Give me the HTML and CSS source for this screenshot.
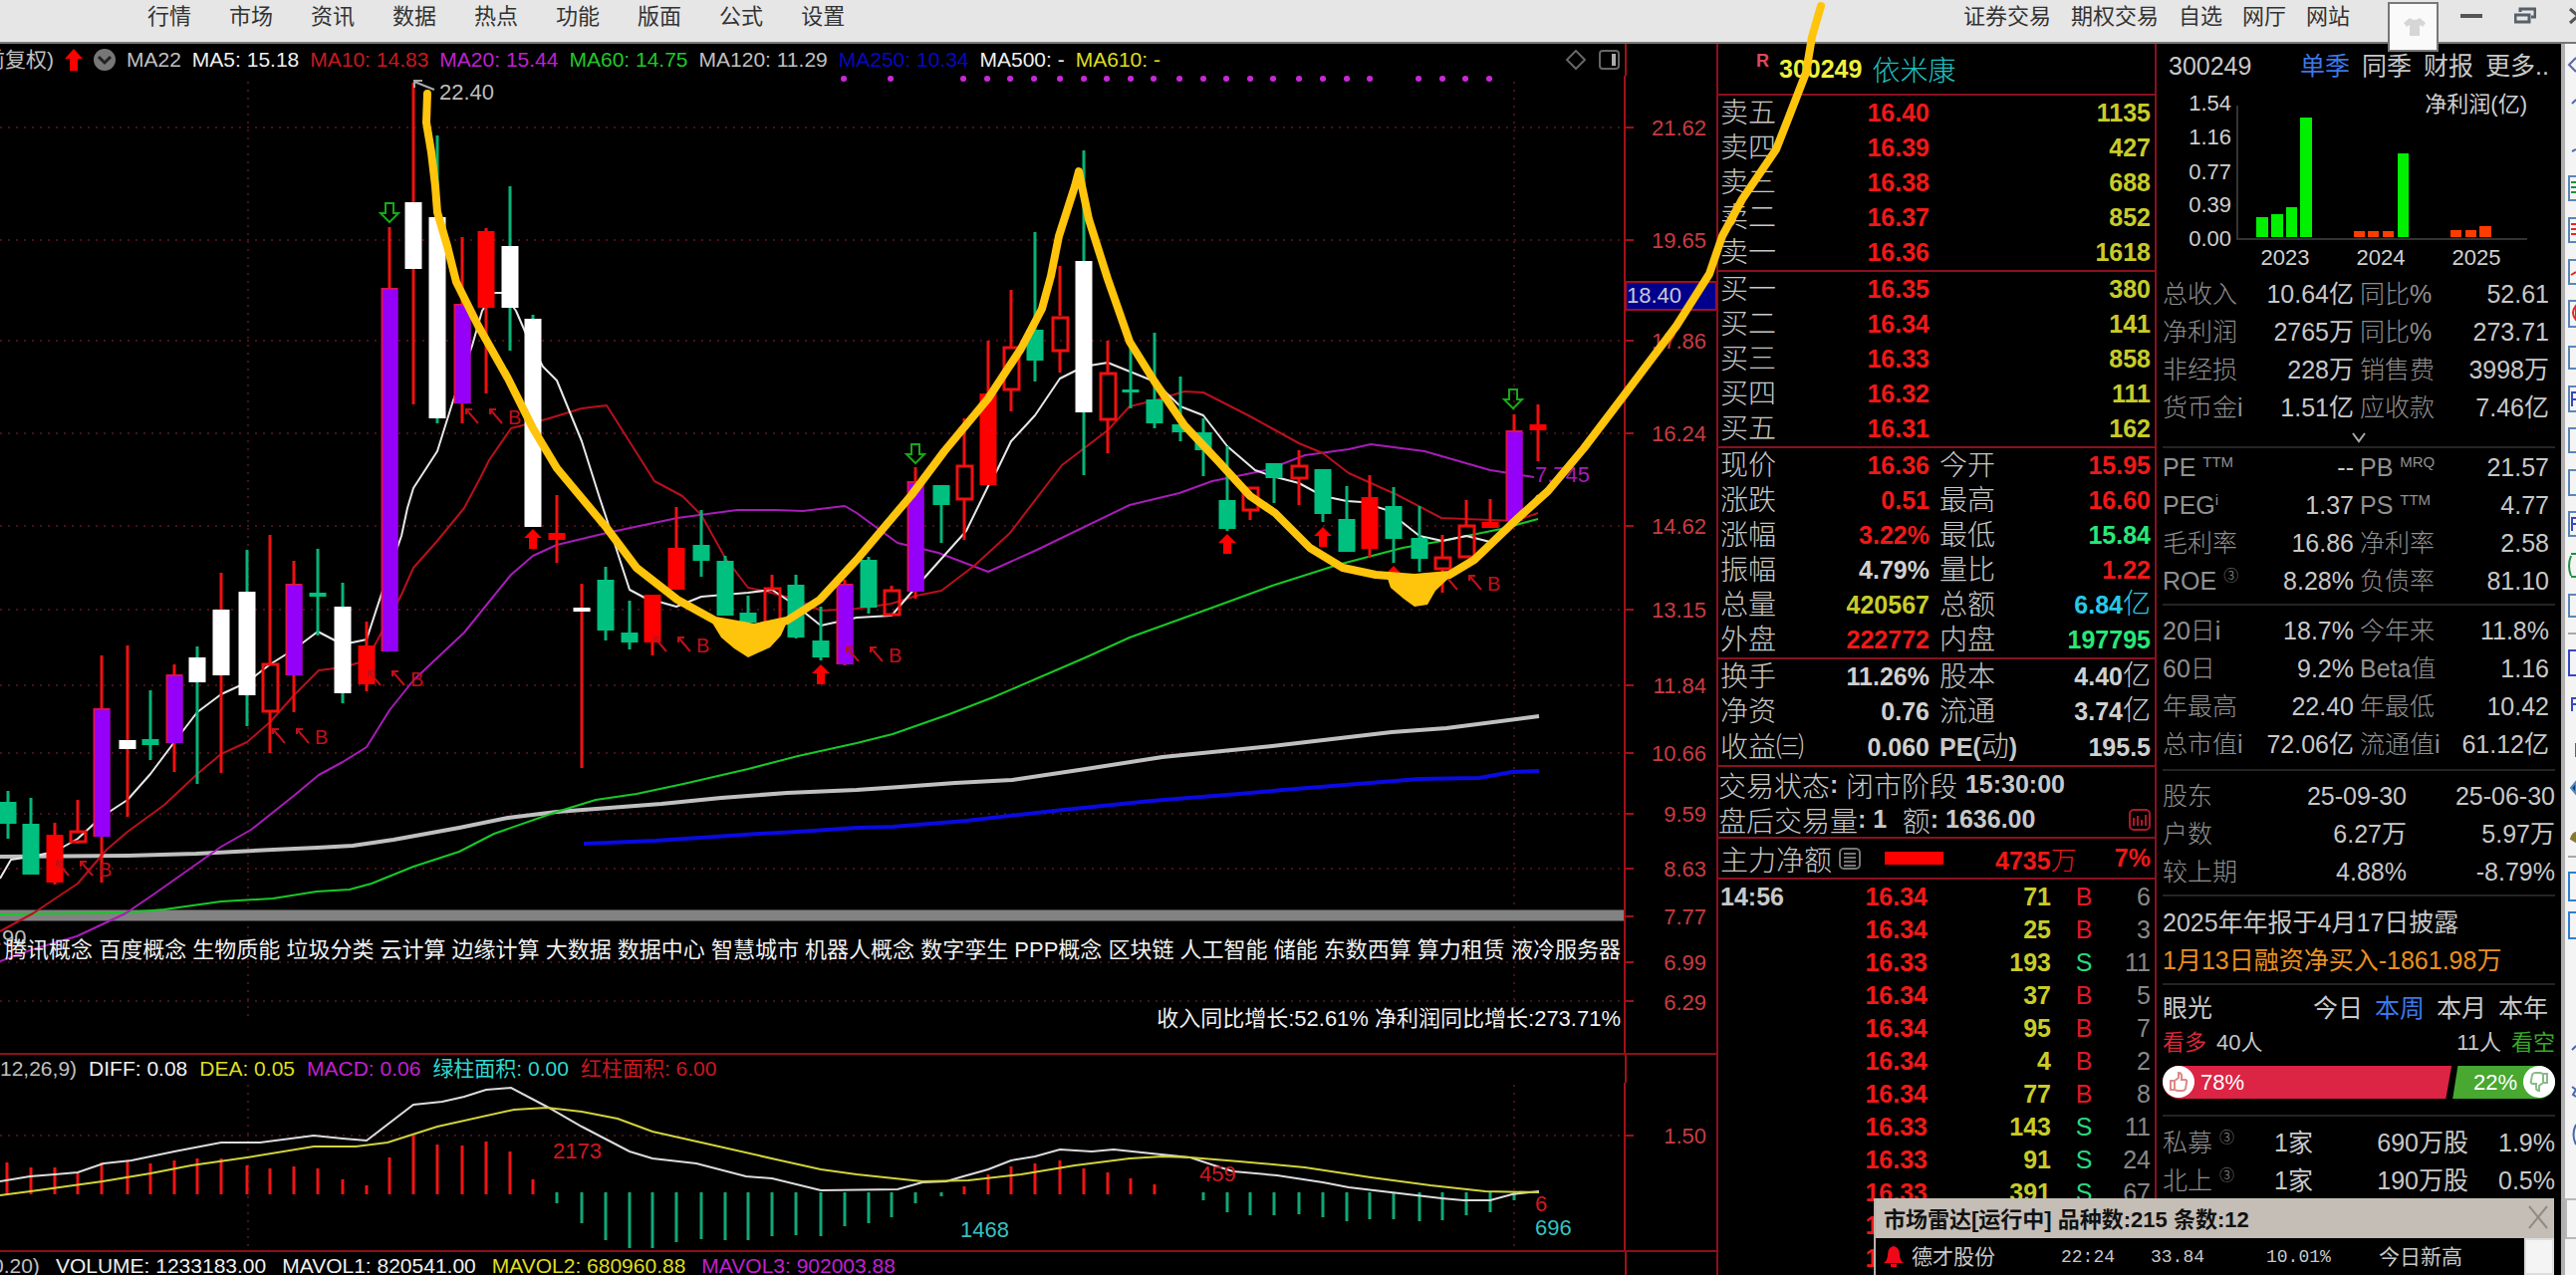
FILE: index.html
```html
<!DOCTYPE html>
<html lang="zh-CN">
<head>
<meta charset="utf-8">
<title>依米康 300249</title>
<link rel="stylesheet" href="styles.css">
</head>
<body>
<div class="app">
  <header class="menubar">
    <nav class="menu">
      <a href="#">行情</a><a href="#">市场</a><a href="#">资讯</a><a href="#">数据</a><a href="#">热点</a><a href="#">功能</a><a href="#">版面</a><a href="#">公式</a><a href="#">设置</a>
    </nav>
    <nav class="menu menu-right">
      <a href="#">证券交易</a><a href="#">期权交易</a><a href="#">自选</a><a href="#">网厅</a><a href="#">网站</a>
    </nav>
    <div class="window-buttons">
      <button class="skin" aria-label="换肤"><svg width="22" height="20" viewBox="0 0 22 20"><path d="M6 1L0 6l3 4 3-2v11h10V8l3 2 3-4-6-5q-5 4-10 0z" fill="#d6d6d6"/></svg></button>
      <button aria-label="最小化"><svg width="22" height="20" viewBox="0 0 22 20"><path d="M0 10H22" stroke="#555" stroke-width="4"/></svg></button>
      <button aria-label="还原"><svg width="22" height="20" viewBox="0 0 22 20" fill="none" stroke="#57606a" stroke-width="3"><path d="M6 6V3H21V11H17M1 9H15V16H1z"/></svg></button>
      <button aria-label="关闭"><svg width="22" height="20" viewBox="0 0 22 20"><path d="M2 3L18 17M18 3L2 17" stroke="#555" stroke-width="3"/></svg></button>
    </div>
  </header>

  <div class="workspace">
    <main class="charts">
      <section class="pane price">
        <div class="legend">
          <span class="silver">前复权)</span>
          <svg width="18" height="22" viewBox="0 0 18 22"><path d="M9 0l9 10h-5v12H5V10H0z" fill="#f00"/></svg>
          <svg width="22" height="22" viewBox="0 0 22 22"><circle cx="11" cy="11" r="11" fill="#777"/><path d="M5 8l6 6 6-6" fill="none" stroke="#222" stroke-width="3"/></svg>
          <span class="silver">MA22</span><span class="white">MA5: 15.18</span><span class="crimson">MA10: 14.83</span><span class="magenta">MA20: 15.44</span><span class="green">MA60: 14.75</span><span class="silver">MA120: 11.29</span><span class="blue">MA250: 10.34</span><span class="white">MA500: -</span><span class="yellow">MA610: -</span>
          <svg class="legend-tools" width="56" height="22" viewBox="0 0 56 22" fill="none" stroke="#666" stroke-width="2"><path d="M11 2l9 9-9 9-9-9z"/><rect x="35" y="2" width="19" height="18" rx="3"/><path d="M49 5V17" stroke="#aaa" stroke-width="4"/></svg>
        </div>
        <svg class="plot" viewBox="0 76 1723 981">
          <g class="grid">
            <path d="M0 128H1631M0 241H1631M0 342H1631M0 435H1631M0 528H1631M0 612H1631M0 688H1631M0 756H1631M0 817H1631M0 872H1631M0 966H1631M0 1005H1631M249 82V1025M1520 82V1025"/>
          </g>
          <path d="M0 919H1631" stroke="#828282" stroke-width="11"/>
          <path class="axis" d="M1631 76V1057M1631 128h9M1631 241h9M1631 342h9M1631 435h9M1631 528h9M1631 612h9M1631 688h9M1631 756h9M1631 817h9M1631 872h9M1631 920h9M1631 966h9M1631 1005h9"/>
          <path d="M847 79h.1M894 79h.1M967 79h.1M991 79h.1M1014 79h.1M1038 79h.1M1064 79h.1M1088 79h.1M1111 79h.1M1135 79h.1M1158 79h.1M1184 79h.1M1208 79h.1M1231 79h.1M1255 79h.1M1278 79h.1M1304 79h.1M1328 79h.1M1352 79h.1M1375 79h.1M1424 79h.1M1448 79h.1M1471 79h.1M1495 79h.1" stroke="#c828d8" stroke-width="6" stroke-linecap="round"/>

          <g fill="none" stroke-linejoin="round">
            <path stroke="#c0c0c0" stroke-width="4" d="M0 860L128 859 197 857 274 853 318 851 354 849 395 843 461 831 510 821 559 815 664 807 724 801 790 796 860 793 904 790 959 786 1016 783 1090 772 1167 760 1277 749 1397 735 1452 731 1545 719"/>
            <path stroke="#0a0ae0" stroke-width="4" d="M586 847L658 844 762 837 801 835 860 831 896 830 970 824 1068 813 1156 804 1244 797 1288 793 1425 782 1485 781 1518 775 1545 774"/>
            <path stroke="#18c828" stroke-width="2" d="M0 918L129 916 165 913 222 905 274 902 318 895 351 893 373 887 415 870 461 855 496 837 559 815 598 803 639 797 686 787 751 772 801 759 860 746 896 737 953 717 997 700 1090 660 1134 640 1217 610 1277 588 1343 567 1408 550 1448 543 1507 531 1544 521"/>
            <path stroke="#a81cb8" stroke-width="2" d="M0 965L33 953 77 940 126 917 154 898 222 850 252 833 296 798 320 778 344 765 368 750 391 713 415 683 466 635 513 577 535 558 559 547 609 535 680 520 740 512 779 512 806 513 848 508 860 515 901 545 942 555 992 574 1041 552 1134 507 1184 495 1217 483 1271 472 1310 457 1354 451 1376 446 1430 453 1496 472 1540 479"/>
            <path stroke="#b8101c" stroke-width="2" d="M0 935L33 917 78 887 107 853 128 835 165 808 198 777 222 757 248 745 271 725 296 697 320 673 344 670 368 663 391 620 403 597 415 570 439 543 466 510 482 480 491 462 513 430 548 421 584 410 609 407 657 483 685 498 704 517 728 560 751 590 770 594 800 602 824 613 860 611 895 606 920 598 945 593 978 568 1014 535 1056 480 1066 467 1112 432 1134 408 1159 402 1189 393 1208 394 1255 418 1304 445 1328 455 1354 475 1403 497 1447 520 1521 523 1544 515"/>
            <path stroke="#e8e8e8" stroke-width="2" d="M0 882L11 863 31 860 55 855 78 842 102 820 128 803 151 777 175 745 198 715 222 697 248 685 271 667 295 652 319 634 344 647 368 642 384 593 403 538 409 510 415 490 439 453 455 402 474 347 484 312 496 294 505 294 518 312 528 335 545 368 559 382 584 443 602 500 608 518 632 592 647 600 679 609 704 599 751 595 775 592 799 608 824 628 860 620 895 618 919 590 970 533 992 488 1001 472 1015 443 1039 417 1064 380 1088 368 1112 364 1159 383 1185 408 1208 417 1232 448 1260 472 1277 478 1304 485 1328 498 1352 503 1367 504 1392 512 1425 538 1448 543 1472 538 1496 544 1532 512 1544 497"/>
          </g>

          <g fill="none" stroke-width="3">
            <path stroke="#f01010" d="M55 826V888M78 803V834M78 844V847M102 658V886M128 648V820M175 667V775M222 575V776M271 537V666M271 714V756M295 563V715M368 624V694M391 228V289M415 83V406M464 238V425M488 229V395M559 497V565M584 586V771M655 597V658M679 509V592M775 577V590M848 582V668M895 588V592M919 469V601M968 420V467M968 501V542M992 342V487M1015 291V348M1015 391V413M1064 267V317M1064 352V374M1112 342V374M1112 422V455M1255 512V522M1304 452V467M1304 480V507M1375 477V560M1448 537V559M1448 572V595M1472 502V527M1496 501V530M1520 416V432M1544 406V463"/>
            <path stroke="#06b478" d="M8 794V842M31 801V878M151 693V763M198 649V787M248 552V729M319 551V638M344 585V706M439 136V425M512 187V352M535 316V330M608 569V643M632 603V652M704 512V579M728 558V618M751 598V625M799 577V641M824 609V663M872 559V616M945 487V545M1039 233V383M1088 151V477M1135 347V410M1159 334V430M1185 378V443M1208 420V478M1232 448V533M1279 465V505M1328 471V524M1352 488V554M1399 489V565M1425 508V574"/>
          </g>
          <g fill="none" stroke-width="17">
            <path stroke="#00c080" d="M8 805V827M31 827V878M151 742V748M319 595V599M608 582V633M632 635V645M704 547V563M728 563V618M751 615V625M799 587V640M824 643V660M872 562V610M945 487V507M1039 331V362M1135 391V394M1159 401V425M1185 426V434M1208 434V452M1232 502V531M1279 465V480M1328 471V516M1352 521V554M1399 508V541M1425 540V561"/>
            <path stroke="#f00" d="M55 838V886M368 648V687M488 232V309M559 535V542M655 597V645M679 550V592M992 395V487M1375 499V551M1496 524V530M1544 426V432"/>
            <path stroke="#fff" d="M128 743V752M198 660V685M222 612V678M248 594V698M344 609V696M415 203V270M439 218V420M512 247V309M535 320V529M584 610V614M1088 262V414"/>
            <path stroke="#e01050" d="M102 711V840M175 677V746M295 586V678M391 289V654M464 305V405M848 586V667M919 483V594M1520 432V523"/>
          </g>
          <path fill="none" stroke="#9400f8" stroke-width="15" d="M103 713V840M176 679V746M296 588V678M392 291V654M465 307V405M849 588V667M920 485V594M1521 434V523"/>
          <path fill="none" stroke="#f01010" stroke-width="3" d="M71 835h15v10h-15zM264 667h15v47h-15zM768 591h15v35h-15zM888 593h15v24h-15zM961 468h15v33h-15zM1008 349h15v42h-15zM1057 319h15v33h-15zM1105 375h15v46h-15zM1248 490h15v22h-15zM1297 468h15v12h-15zM1441 560h15v11h-15zM1465 528h15v31h-15z"/>

          <defs>
            <path id="up" d="M0 0l9 9h-5v11h-8V9h-5z" fill="#f00"/>
            <path id="down" d="M-4 0h8v10h5L0 19l-9-9h5z" fill="none" stroke="#18a818" stroke-width="2"/>
            <g id="buy"><path d="M12 14L0 0M0 5V0H6M36 14L24 0M24 5V0H30" fill="none" stroke="#c01018" stroke-width="2"/><text x="42" y="15" class="t-buy">B</text></g>
          </defs>
          <use href="#up" x="535" y="531"/><use href="#up" x="824" y="667"/><use href="#up" x="1232" y="536"/><use href="#up" x="1328" y="529"/><use href="#up" x="1399" y="568"/>
          <use href="#down" x="391" y="204"/><use href="#down" x="919" y="446"/><use href="#down" x="1519" y="391"/>
          <use href="#buy" x="57" y="865"/><use href="#buy" x="274" y="732"/><use href="#buy" x="370" y="674"/><use href="#buy" x="468" y="411"/><use href="#buy" x="657" y="640"/><use href="#buy" x="850" y="650"/><use href="#buy" x="1451" y="578"/>

          <path d="M436 90L416 82M416 88V81h8" fill="none" stroke="#aaa" stroke-width="2"/>
          <text class="t" x="441" y="100" fill="#bdbdbd">22.40</text>
          <text class="t" x="1541" y="484" fill="#a81cb8">7.745</text>
          <text class="t" x="-4" y="949" fill="#bdbdbd">.90</text>
          <g class="t axis-text">
            <text x="1713" y="136">21.62</text><text x="1713" y="249">19.65</text><text x="1713" y="350">17.86</text><text x="1713" y="443">16.24</text><text x="1713" y="536">14.62</text><text x="1713" y="620">13.15</text><text x="1713" y="696">11.84</text><text x="1713" y="764">10.66</text><text x="1713" y="825">9.59</text><text x="1713" y="880">8.63</text><text x="1713" y="928">7.77</text><text x="1713" y="974">6.99</text><text x="1713" y="1014">6.29</text>
          </g>
          <rect x="1632" y="283" width="91" height="28" fill="#00008c" stroke="#a01020" stroke-width="2"/>
          <text class="t" x="1633" y="304" fill="#c8c8d8">18.40</text>
          <text class="tags" x="1627" y="961">念 腾讯概念 百度概念 生物质能 垃圾分类 云计算 边缘计算 大数据 数据中心 智慧城市 机器人概念 数字孪生 PPP概念 区块链 人工智能 储能 东数西算 算力租赁 液冷服务器</text>
          <text class="tags" x="1627" y="1030">收入同比增长:52.61% 净利润同比增长:273.71%</text>
        </svg>
      </section>

      <section class="pane macd">
        <div class="legend">
          <span class="silver">12,26,9)</span><span class="white">DIFF: 0.08</span><span class="yellow">DEA: 0.05</span><span class="magenta">MACD: 0.06</span><span class="cyan">绿柱面积: 0.00</span><span class="crimson">红柱面积: 6.00</span>
        </div>
        <svg class="plot" viewBox="0 1088 1723 168">
          <g class="grid"><path d="M0 1141H1631M249 1090V1254M1520 1090V1254"/></g>
          <path class="axis" d="M1631 1088V1256M1631 1141h9"/>
          <path fill="none" stroke="#f01414" stroke-width="3" d="M7 1200V1168M31 1200V1173M55 1200V1173M78 1200V1178M102 1200V1168M128 1200V1167M151 1200V1169M175 1200V1166M198 1200V1164M222 1200V1164M248 1200V1171M271 1200V1174M295 1200V1172M319 1200V1174M344 1200V1185M368 1200V1191M391 1200V1163M415 1200V1141M439 1200V1150M464 1200V1151M488 1200V1147M512 1200V1157M535 1200V1185M968 1200V1192M992 1200V1180M1015 1200V1172M1039 1200V1169M1064 1200V1166M1088 1200V1174M1112 1200V1178M1135 1200V1184M1159 1200V1190"/>
          <path fill="none" stroke="#10a878" stroke-width="3" d="M559 1198V1209M584 1198V1229M608 1198V1246M632 1198V1254M655 1198V1254M679 1198V1248M704 1198V1245M728 1198V1246M751 1198V1246M775 1198V1242M799 1198V1241M824 1198V1242M848 1198V1232M872 1198V1229M895 1198V1223M919 1198V1209M945 1198V1202M1208 1198V1206M1232 1198V1218M1255 1198V1221M1279 1198V1221M1304 1198V1220M1328 1198V1223M1352 1198V1227M1375 1198V1225M1399 1198V1225M1425 1198V1227M1448 1198V1226M1472 1198V1221M1496 1198V1218M1520 1198V1206"/>
          <path fill="none" stroke="#dcdcdc" stroke-width="2" d="M0 1187L30 1182 55 1180 78 1178 104 1169 132 1166 175 1157 222 1148 261 1148 315 1141 344 1144 368 1146 415 1110 444 1107 466 1102 488 1095 513 1093 549 1112 584 1132 632 1157 655 1164 699 1169 749 1182 775 1184 824 1196 901 1195 926 1188 950 1187 967 1182 992 1175 1015 1166 1039 1162 1064 1155 1096 1157 1118 1155 1156 1159 1195 1163 1222 1172 1238 1177 1282 1181 1328 1188 1354 1193 1447 1204 1469 1206 1496 1206 1518 1200 1545 1197"/>
          <path fill="none" stroke="#d2d23c" stroke-width="2" d="M0 1201L38 1196 103 1187 151 1179 192 1171 248 1163 315 1152 357 1152 389 1148 439 1132 516 1115 549 1113 584 1117 620 1124 655 1137 713 1150 779 1165 824 1175 860 1180 926 1187 972 1186 1025 1180 1079 1171 1134 1164 1167 1162 1195 1163 1244 1167 1310 1173 1376 1183 1436 1191 1491 1197 1545 1198"/>
          <text class="t" x="555" y="1164" fill="#d01820">2173</text><text class="t" x="1204" y="1187" fill="#d01820">459</text><text class="t" x="1541" y="1217" fill="#d01820">6</text>
          <text class="t" x="964" y="1243" fill="#38c0c0">1468</text><text class="t" x="1541" y="1241" fill="#38c0c0">696</text>
          <g class="t axis-text"><text x="1713" y="1149">1.50</text></g>
        </svg>
      </section>

      <section class="pane volume">
        <div class="legend">
          <span class="silver">0.20)</span><span class="white">VOLUME: 1233183.00</span><span class="white">MAVOL1: 820541.00</span><span class="yellow">MAVOL2: 680960.88</span><span class="magenta">MAVOL3: 902003.88</span>
        </div>
      </section>
    </main>

    <aside class="quote">
      <h1><sup>R</sup> <b>300249</b> <span>依米康</span></h1>
      <table class="rows">
        <tr><th>卖五</th><td class="up">16.40</td><td class="vol" colspan="2">1135</td></tr>
        <tr><th>卖四</th><td class="up">16.39</td><td class="vol" colspan="2">427</td></tr>
        <tr><th>卖三</th><td class="up">16.38</td><td class="vol" colspan="2">688</td></tr>
        <tr><th>卖二</th><td class="up">16.37</td><td class="vol" colspan="2">852</td></tr>
        <tr><th>卖一</th><td class="up">16.36</td><td class="vol" colspan="2">1618</td></tr>
      </table>
      <table class="rows">
        <tr><th>买一</th><td class="up">16.35</td><td class="vol" colspan="2">380</td></tr>
        <tr><th>买二</th><td class="up">16.34</td><td class="vol" colspan="2">141</td></tr>
        <tr><th>买三</th><td class="up">16.33</td><td class="vol" colspan="2">858</td></tr>
        <tr><th>买四</th><td class="up">16.32</td><td class="vol" colspan="2">111</td></tr>
        <tr><th>买五</th><td class="up">16.31</td><td class="vol" colspan="2">162</td></tr>
      </table>
      <table class="rows">
        <tr><th>现价</th><td class="up">16.36</td><th>今开</th><td class="up">15.95</td></tr>
        <tr><th>涨跌</th><td class="up">0.51</td><th>最高</th><td class="up">16.60</td></tr>
        <tr><th>涨幅</th><td class="up">3.22%</td><th>最低</th><td class="down">15.84</td></tr>
        <tr><th>振幅</th><td>4.79%</td><th>量比</th><td class="up">1.22</td></tr>
        <tr><th>总量</th><td class="vol">420567</td><th>总额</th><td class="aqua">6.84<span class="unit">亿</span></td></tr>
        <tr><th>外盘</th><td class="up">222772</td><th>内盘</th><td class="down">197795</td></tr>
      </table>
      <table class="rows">
        <tr><th>换手</th><td>11.26%</td><th>股本</th><td>4.40<span class="unit">亿</span></td></tr>
        <tr><th>净资</th><td>0.76</td><th>流通</th><td>3.74<span class="unit">亿</span></td></tr>
        <tr><th>收益㈢</th><td>0.060</td><th><b>PE(</b>动<b>)</b></th><td>195.5</td></tr>
      </table>
      <div class="status">
        <p>交易状态<b>:</b> 闭市阶段 <b>15:30:00</b></p>
        <p>盘后交易量<b>: 1</b>&nbsp; 额<b>: 1636.00</b>
          <svg width="22" height="22" viewBox="0 0 22 22" fill="none" stroke="#b01828" stroke-width="2"><rect x="1" y="1" width="20" height="20" rx="4"/><path d="M5 17V9M9 17V7M13 17V11M17 17V6"/></svg></p>
      </div>
      <div class="flow">
        <span>主力净额</span>
        <svg width="22" height="22" viewBox="0 0 22 22" fill="none" stroke="#777" stroke-width="2"><rect x="1" y="1" width="20" height="20" rx="4"/><path d="M5 6H17M5 10H17M5 14H17M5 18H17"/></svg>
        <i class="flow-bar"></i>
        <b class="flow-sum">4735<span class="unit">万</span></b>
        <b>7%</b>
      </div>
      <table class="ticks">
        <tr><th>14:56</th><td>16.34</td><td>71</td><td class="buy">B</td><td>6</td></tr>
        <tr><th></th><td>16.34</td><td>25</td><td class="buy">B</td><td>3</td></tr>
        <tr><th></th><td>16.33</td><td>193</td><td class="sell">S</td><td>11</td></tr>
        <tr><th></th><td>16.34</td><td>37</td><td class="buy">B</td><td>5</td></tr>
        <tr><th></th><td>16.34</td><td>95</td><td class="buy">B</td><td>7</td></tr>
        <tr><th></th><td>16.34</td><td>4</td><td class="buy">B</td><td>2</td></tr>
        <tr><th></th><td>16.34</td><td>77</td><td class="buy">B</td><td>8</td></tr>
        <tr><th></th><td>16.33</td><td>143</td><td class="sell">S</td><td>11</td></tr>
        <tr><th></th><td>16.33</td><td>91</td><td class="sell">S</td><td>24</td></tr>
        <tr><th></th><td>16.33</td><td>391</td><td class="sell">S</td><td>67</td></tr>
        <tr><th></th><td>16.33</td><td></td><td></td><td></td></tr>
        <tr><th></th><td>16.33</td><td></td><td></td><td></td></tr>
      </table>
    </aside>

    <aside class="finance">
      <div class="finance-head"><span>300249</span><nav><a href="#" class="on">单季</a><a href="#">同季</a><a href="#">财报</a><a href="#">更多..</a></nav></div>
      <svg class="profit" viewBox="2165 88 406 188">
        <path d="M2246 106V240H2537" fill="none" stroke="#333" stroke-width="2"/>
        <path fill="#00f000" d="M2265 218h12v20h-12zM2280 215h12v23h-12zM2295 208h11v30h-11zM2309 118h12v120h-12zM2407 154h11v84h-11z"/>
        <path fill="#ff3c00" d="M2363 232h11v6h-11zM2377 232h11v6h-11zM2392 232h11v6h-11zM2460 231h11v7h-11zM2475 231h11v7h-11zM2489 227h12v11h-12z"/>
        <g text-anchor="end"><text x="2240" y="111">1.54</text><text x="2240" y="145">1.16</text><text x="2240" y="180">0.77</text><text x="2240" y="213">0.39</text><text x="2240" y="247">0.00</text><text x="2537" y="112">净利润(亿)</text></g>
        <g text-anchor="middle"><text x="2294" y="266">2023</text><text x="2390" y="266">2024</text><text x="2486" y="266">2025</text></g>
      </svg>
      <table class="facts">
        <tr><th>总收入</th><td>10.64亿</td><th>同比%</th><td>52.61</td></tr>
        <tr><th>净利润</th><td>2765万</td><th>同比%</th><td>273.71</td></tr>
        <tr><th>非经损</th><td>228万</td><th>销售费</th><td>3998万</td></tr>
        <tr><th>货币金i</th><td>1.51亿</td><th>应收款</th><td>7.46亿</td></tr>
      </table>
      <button class="more" aria-label="展开"><svg width="14" height="11" viewBox="0 0 14 11"><path d="M1 1l6 8 6-8" fill="none" stroke="#aaa" stroke-width="2"/></svg></button>
      <table class="facts ruled">
        <tr><th>PE <sup>TTM</sup></th><td>--</td><th>PB <sup>MRQ</sup></th><td>21.57</td></tr>
        <tr><th>PEG<sup>i</sup></th><td>1.37</td><th>PS <sup>TTM</sup></th><td>4.77</td></tr>
        <tr><th>毛利率</th><td>16.86</td><th>净利率</th><td>2.58</td></tr>
        <tr><th>ROE <sup>③</sup></th><td>8.28%</td><th>负债率</th><td>81.10</td></tr>
      </table>
      <table class="facts ruled">
        <tr><th>20日i</th><td>18.7%</td><th>今年来</th><td>11.8%</td></tr>
        <tr><th>60日</th><td>9.2%</td><th>Beta值</th><td>1.16</td></tr>
        <tr><th>年最高</th><td>22.40</td><th>年最低</th><td>10.42</td></tr>
        <tr><th>总市值i</th><td>72.06亿</td><th>流通值i</th><td>61.12亿</td></tr>
      </table>
      <table class="holders ruled">
        <tr><th>股东</th><td>25-09-30</td><td>25-06-30</td></tr>
        <tr><th>户数</th><td>6.27万</td><td>5.97万</td></tr>
        <tr><th>较上期</th><td>4.88%</td><td>-8.79%</td></tr>
      </table>
      <div class="news ruled"><p>2025年年报于4月17日披露</p><p class="orange">1月13日融资净买入-1861.98万</p></div>
      <div class="views ruled">
        <div class="views-head"><span>眼光</span><nav><a href="#">今日</a><a href="#" class="on">本周</a><a href="#">本月</a><a href="#">本年</a></nav></div>
        <div class="views-count"><span class="bull">看多</span><span>40人</span><span class="last">11人</span><span class="bear">看空</span></div>
        <div class="vote">
          <span class="vote-up" style="flex-grow:78"><svg width="32" height="32" viewBox="0 0 32 32"><circle cx="16" cy="16" r="16" fill="#fff"/><path d="M8 15h4v9H8zM12 15l4-3V7q3 0 3 3v4h4q2 1 1 3l-1 6q-1 2-3 2h-5l-3-1z" fill="none" stroke="#d88" stroke-width="2"/></svg>78%</span>
          <span class="vote-down" style="flex-grow:22">22%<svg width="32" height="32" viewBox="0 0 32 32"><circle cx="16" cy="16" r="16" fill="#fff"/><path d="M24 17h-4V8h4zM20 17l-4 3v5q-3 0-3-3v-4H9q-2-1-1-3l1-6q1-2 3-2h5l3 1z" fill="none" stroke="#8b8" stroke-width="2"/></svg></span>
        </div>
      </div>
      <table class="funds ruled">
        <tr><th>私募 <sup>③</sup></th><td>1家</td><td>690万股</td><td>1.9%</td></tr>
        <tr><th>北上 <sup>③</sup></th><td>1家</td><td>190万股</td><td>0.5%</td></tr>
      </table>
    </aside>

    <div class="toolstrip">
      <svg width="11" height="1237" viewBox="0 43 11 1237" fill="none" stroke="#5a86b8" stroke-width="2">
        <path d="M11 57L4 64l7 7M7 103l4-4M7 151l4-2" stroke="#5868a8"/>
        <path d="M11 176H4v24h7M11 218H4v24h7M11 260H4v24h7M11 301H4v26h7M11 347H4v22h7M11 387H4v25h7M11 429H4v24h7M11 471H4v25h7M11 513H4v24h7M11 596H4v22h7"/>
        <path d="M6 182h5M6 187h5M6 192h5M6 557q-4 10 0 20M11 555H6M11 578H6" stroke="#209040"/>
        <path d="M6 224h5M6 229h5M6 234h5M6 275l5-3M11 306q-6 7 0 14z" stroke="#e02828"/>
        <path d="M7 407V393h4M7 400h4M7 532V519h4M7 525h4M7 713V700h4M7 706h4M11 652H4v25h7" stroke="#3848c0"/>
        <path d="M3 635h8M3 859h8" stroke="#a8a8a8"/>
        <path d="M11 745v14" stroke="#d03028"/><path d="M11 784l-5 6 5 6z" fill="#084080"/><path d="M6 841q2-6 5-6v9z" fill="#887838" stroke="#887838"/>
        <path d="M11 875H4v28h7M11 915H4v26h7" stroke="#3080d0"/>
        <path d="M7 1053l4-4M7 1090l4 3-3 5 3 2M11 1128q-5 10 0 20" stroke="#4868a8"/>
        <path d="M11 1203H1v39h10" stroke="#b8b8b8"/>
      </svg>
    </div>
  </div>

  <svg class="sketch" viewBox="0 0 2586 1280">
    <path d="M429 94L428 123 433 153 437 187 439 213 449 247 458 283 480 327 510 380 535 430 559 470 584 500 609 530 639 570 680 602 718 623 757 630 790 623 823 602 860 562 893 523 915 497 948 453 992 400 1025 350 1046 310 1055 277 1063 237 1079 187 1083 172 1093 220 1112 280 1134 343 1159 383 1189 427 1222 462 1255 498 1280 515 1315 550 1348 570 1381 577 1420 580 1455 577 1480 562 1524 520 1554 493 1590 450 1628 400 1683 327 1716 275 1729 237 1749 200 1783 150 1796 117 1813 73 1819 37 1828 6" fill="none" stroke="#ffc40c" stroke-width="8" stroke-linejoin="round" stroke-linecap="round"/>
    <path d="M713 622L724 640 737 651 751 660 773 650 784 638 792 620 757 630zM1392 578L1396 590 1409 601 1420 609 1433 607 1441 593 1457 578z" fill="#ffc40c"/>
  </svg>

  <section class="radar">
    <header><h2>市场雷达[运行中] 品种数:215 条数:12</h2><button aria-label="关闭"><svg width="20" height="24" viewBox="0 0 20 24"><path d="M1 1L19 23M19 1L1 23" stroke="#8f8a82" stroke-width="2"/></svg></button></header>
    <div class="radar-row">
      <svg width="20" height="22" viewBox="0 0 20 22"><path d="M10 0q6 1 6 9 0 5 4 8H0q4-3 4-8 0-8 6-9zM7 18h6v3H7z" fill="#f00818"/></svg>
      <span>德才股份</span><span class="mono">22:24</span><span class="mono">33.84</span><span class="mono">10.01%</span><span>今日新高</span>
      <i class="scroll"></i>
    </div>
  </section>
</div>
</body>
</html>
```
FILE: styles.css
```css
* { box-sizing: border-box; }
body {
  margin: 0;
  background: #000;
  color: #c8c8c8;
  font-family: "Liberation Sans", "Noto Sans CJK SC", sans-serif;
  overflow: hidden;
}
a { color: inherit; text-decoration: none; }
p, h1, h2 { margin: 0; font-weight: inherit; }
table { border-collapse: separate; border-spacing: 0; table-layout: fixed; width: 100%; }
th, td { padding: 0; white-space: nowrap; }
button { border: 0; padding: 0; background: none; display: block; }
svg { display: block; flex: none; }

.app { position: relative; display: flex; flex-direction: column; height: 100vh; overflow: hidden; }

/* menu bar */
.menubar { flex: none; display: flex; height: 44px; background: #e6e6e6; border-bottom: 2px solid #777; color: #333; font-size: 22px; line-height: 33px; }
.menu { display: flex; gap: 38px; padding-left: 148px; }
.menu-right { gap: 20px; margin-left: auto; padding: 0 38px 0 0; }
.window-buttons { display: flex; align-items: flex-start; gap: 32px; width: 189px; }
.window-buttons button { padding-top: 6px; }
.window-buttons .skin { width: 51px; height: 50px; margin: 2px -10px 0 0; padding: 4px 14px; border: 2px solid #777; background: #fafafa; position: relative; }

.workspace { flex: 1; min-height: 0; display: flex; }

/* charts */
.charts { flex: 1; min-width: 0; overflow: hidden; }
.pane { border-bottom: 2px solid #8c1018; }
.legend { display: flex; align-items: center; gap: 11px; height: 28px; margin-right: 90px; border-right: 2px solid #a01018; font-size: 21px; line-height: 28px; white-space: nowrap; overflow: hidden; }
.price .legend { height: 32px; line-height: 32px; }
.price .legend > :first-child { margin-left: -16px; }
.macd .legend { gap: 12px; }
.volume .legend { gap: 16px; }
.volume .legend > :first-child { margin-left: -8px; }
.legend-tools { margin-left: auto; margin-right: 4px; }
.plot { width: 100%; height: auto; overflow: hidden; }
.grid path { fill: none; stroke: #4a1018; stroke-width: 2; stroke-dasharray: 2 6; }
.axis { fill: none; stroke: #a01018; stroke-width: 2; }
.t { font-size: 22px; }
.t-buy { font-size: 20px; fill: #c01018; }
.axis-text { fill: #c83c40; text-anchor: end; }
.tags { font-size: 22px; fill: #f0f0f0; text-anchor: end; }
.silver { color: #c0c0c0; }
.white { color: #f0f0f0; }
.crimson { color: #c81820; }
.magenta { color: #c020d0; }
.green { color: #20c828; }
.blue { color: #0808c0; }
.yellow { color: #dede20; }
.cyan { color: #30d8d0; }

/* quote panel */
.quote { flex: none; width: 442px; border: solid #8c1020; border-width: 0 2px; overflow: hidden; font-size: 25px; }
.quote h1 { display: flex; align-items: center; gap: 10px; height: 50px; padding-left: 38px; font-size: 25px; color: #f0f03c; }
.quote h1 sup { color: #e04858; font: bold 18px "Liberation Sans", sans-serif; align-self: flex-start; padding-top: 7px; }
.quote h1 span { color: #20c0c0; font-size: 28px; font-weight: 300; }
.rows, .status, .flow, .ticks { border-top: 2px solid #8c1020; }
.rows tr { height: 35px; }
.rows th, .rows td { line-height: 35px; }
.rows th, .status, .flow, .unit { font-weight: 300; font-size: 28px; }
.rows th { text-align: left; padding-left: 2px; width: 98px; }
.rows td { text-align: right; font-weight: 700; color: #d0d0d0; padding-right: 4px; }
.rows td:nth-child(2) { width: 118px; }
.rows td + th { padding-left: 6px; }
.rows b, .status b, .flow b { font-size: 25px; font-weight: 700; }
.rows .up { color: #f01818; }
.rows .down { color: #28e878; }
.rows .vol { color: #c8cc28; }
.rows .aqua { color: #28c8e8; }
.rows .unit { line-height: 1; }
.status p { display: flex; align-items: center; height: 35px; white-space: pre; }
.status svg { margin: 0 4px 0 auto; }
.flow { display: flex; align-items: center; height: 41px; padding: 0 4px 0 2px; }
.flow svg { margin: 0 24px 0 7px; }
.flow-bar { width: 59px; height: 13px; background: #f00; }
.flow b { color: #f01818; }
.flow-sum { margin: 0 auto 0 52px; }
.flow .unit { font-size: 26px; }
.ticks tr { height: 33px; }
.ticks th, .ticks td { font-weight: 700; text-align: right; line-height: 32px; }
.ticks th { text-align: left; width: 98px; padding-left: 2px; }
.ticks td:nth-child(2) { color: #f01818; width: 112px; }
.ticks td:nth-child(3) { color: #c8cc28; width: 124px; }
.ticks td:nth-child(4) { font-weight: 400; text-align: center; width: 66px; }
.ticks td:nth-child(5) { color: #888; font-weight: 400; padding-right: 4px; }
.ticks td.buy { color: #e01828; }
.ticks td.sell { color: #28d880; }

/* finance panel */
.finance { flex: none; width: 406px; overflow: hidden; padding: 0 6px; font-size: 25px; }
.finance-head, .views-head { display: flex; justify-content: space-between; }
.finance-head { height: 44px; line-height: 44px; padding: 0 6px; }
.finance nav, .views nav { display: flex; gap: 12px; }
.finance .on { color: #3c78e8; }
.profit { margin: 0 -6px; width: 406px; font-size: 22px; }
.profit text { fill: #d0d0d0; }
.facts tr, .holders tr, .funds tr { height: 38px; }
.finance th { text-align: left; font-weight: 300; color: #909090; line-height: 36px; }
.finance td { text-align: right; line-height: 36px; }
.finance sup { font-size: 15px; line-height: 1; vertical-align: 9px; }
.facts th { width: 86px; }
.facts td { padding-right: 2px; }
.facts td:nth-child(2) { width: 108px; }
.facts td:last-child { padding-right: 6px; }
.facts th:nth-child(3) { padding-left: 4px; }
.more { height: 20px; margin: 0 auto; padding-top: 2px; }
.ruled { border-top: 2px solid #242424; }
.facts.ruled, .holders { padding: 6px 0; }
.more + .facts.ruled { padding: 0 0 4px; }
.holders.ruled { padding: 6px 0 4px; }
.finance .holders td { width: 149px; }
.news { height: 89px; padding-top: 7px; }
.news p { line-height: 38px; }
.orange { color: #e89020; }
.views { height: 132px; }
.views-head { height: 46px; line-height: 46px; padding-right: 7px; }
.views-count { display: flex; gap: 10px; font-size: 22px; line-height: 24px; }
.views-count .last { margin-left: auto; }
.bull { color: #d82838; }
.bear { color: #38a828; }
.vote { display: flex; height: 33px; margin-top: 11px; color: #fff; font-size: 22px; line-height: 33px; }
.vote span { display: flex; gap: 6px; flex-basis: 0; }
.vote-up { background: #dc2444; border-radius: 17px 0 0 17px; clip-path: polygon(0 0, 100% 0, 98% 100%, 0 100%); }
.vote .vote-down { flex-basis: 22px; justify-content: flex-end; background: #48a830; border-radius: 0 17px 17px 0; clip-path: polygon(6% 0, 100% 0, 100% 100%, 1% 100%); }
.funds { padding-top: 7px; }
.funds th { width: 80px; }
.funds td:nth-child(2) { width: 71px; }
.funds td:nth-child(3) { width: 156px; }

.toolstrip { flex: none; width: 15px; background: #f4f4f4; border-left: 4px solid #b0b0b0; overflow: hidden; }

/* overlays */
.sketch { position: absolute; inset: 0; width: 100%; pointer-events: none; }
.radar { position: absolute; right: 22px; bottom: 0; width: 683px; background: #000; border-left: 2px solid #b8b4ac; }
.radar header { display: flex; align-items: center; justify-content: space-between; height: 40px; padding: 0 6px 3px 8px; background: #c4beb6; color: #111; }
.radar h2 { font-size: 22px; font-weight: 700; }
.radar-row { display: grid; grid-template-columns: 20px 142px 82px 108px 105px 1fr 30px; align-items: center; column-gap: 8px; height: 37px; padding-left: 8px; font-size: 21px; line-height: 32px; }
.mono { font-family: "Liberation Mono", monospace; font-size: 18px; }
.scroll { align-self: stretch; background: #f4f4f4; border: 2px solid #ddd; }
```
